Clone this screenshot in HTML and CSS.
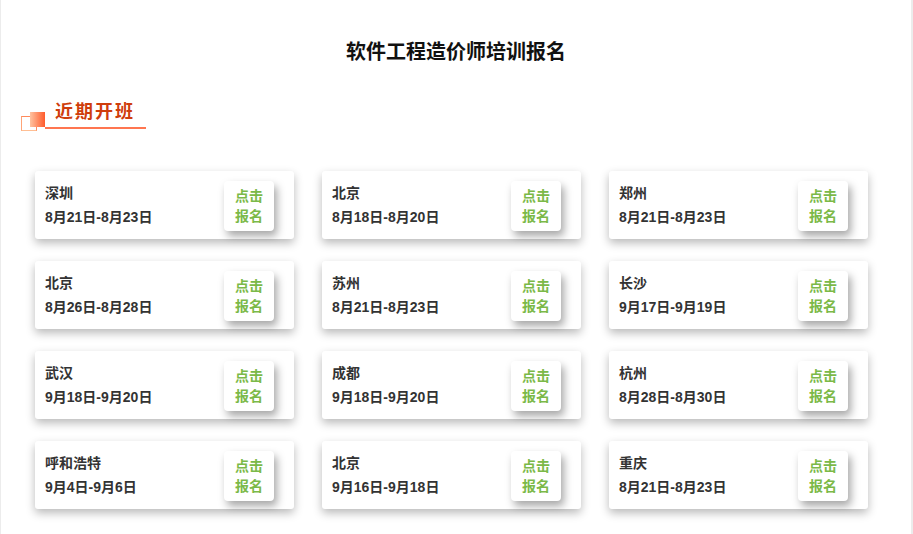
FILE: index.html
```html
<!DOCTYPE html>
<html lang="zh-CN">
<head>
<meta charset="utf-8">
<title>软件工程造价师培训报名</title>
<link rel="stylesheet" href="styles.css">
</head>
<body>
<div class="page">
  <h1 class="title">软件工程造价师培训报名</h1>
  <div class="section-head">
    <span class="sq-outline"></span>
    <span class="sq-fill"></span>
    <span class="underline"></span>
    <span class="section-title">近期开班</span>
  </div>
  <div class="grid">
    <div class="card"><div class="info"><div class="city">深圳</div><div class="date">8月21日-8月23日</div></div><a class="btn">点击<br>报名</a></div>
    <div class="card"><div class="info"><div class="city">北京</div><div class="date">8月18日-8月20日</div></div><a class="btn">点击<br>报名</a></div>
    <div class="card"><div class="info"><div class="city">郑州</div><div class="date">8月21日-8月23日</div></div><a class="btn">点击<br>报名</a></div>
    <div class="card"><div class="info"><div class="city">北京</div><div class="date">8月26日-8月28日</div></div><a class="btn">点击<br>报名</a></div>
    <div class="card"><div class="info"><div class="city">苏州</div><div class="date">8月21日-8月23日</div></div><a class="btn">点击<br>报名</a></div>
    <div class="card"><div class="info"><div class="city">长沙</div><div class="date">9月17日-9月19日</div></div><a class="btn">点击<br>报名</a></div>
    <div class="card"><div class="info"><div class="city">武汉</div><div class="date">9月18日-9月20日</div></div><a class="btn">点击<br>报名</a></div>
    <div class="card"><div class="info"><div class="city">成都</div><div class="date">9月18日-9月20日</div></div><a class="btn">点击<br>报名</a></div>
    <div class="card"><div class="info"><div class="city">杭州</div><div class="date">8月28日-8月30日</div></div><a class="btn">点击<br>报名</a></div>
    <div class="card"><div class="info"><div class="city">呼和浩特</div><div class="date">9月4日-9月6日</div></div><a class="btn">点击<br>报名</a></div>
    <div class="card"><div class="info"><div class="city">北京</div><div class="date">9月16日-9月18日</div></div><a class="btn">点击<br>报名</a></div>
    <div class="card"><div class="info"><div class="city">重庆</div><div class="date">8月21日-8月23日</div></div><a class="btn">点击<br>报名</a></div>
  </div>
</div>
</body>
</html>
```
FILE: styles.css
```css
html, body {
  margin: 0;
  padding: 0;
  background: #fff;
}
body {
  font-family: "Liberation Sans", "Noto Sans CJK SC", sans-serif;
  color: #333;
}
.page {
  box-sizing: border-box;
  width: 913px;
  height: 534px;
  border-left: 1px solid #ececec;
  border-right: 2px solid #ececec;
  overflow: hidden;
}
.title {
  margin: 0;
  padding-top: 40px;
  font-size: 20px;
  line-height: 24px;
  letter-spacing: 0;
  font-weight: bold;
  color: #111;
  text-align: center;
}
.section-head {
  position: relative;
  margin: 34px 0 0 20px;
  width: 125px;
  height: 32px;
}
.section-title {
  position: relative;
  display: block;
  padding: 2px 0 0 34px;
  font-size: 18px;
  line-height: 24px;
  letter-spacing: 2px;
  font-weight: bold;
  color: #cf3d0c;
}
.sq-outline {
  position: absolute;
  left: 0;
  top: 18px;
  width: 14px;
  height: 13px;
  border: 1.5px solid #ff8a5c;
  border-bottom-color: #ffbf94;
  border-left-color: #ffa477;
}
.sq-fill {
  position: absolute;
  left: 9px;
  top: 14px;
  width: 15px;
  height: 15px;
  background: linear-gradient(to right, #ffc3a0, #ff5b2c);
}
.underline {
  position: absolute;
  left: 24px;
  right: 0;
  top: 29px;
  height: 2px;
  background: #ff7650;
}
.grid {
  display: grid;
  grid-template-columns: repeat(3, 259px);
  grid-auto-rows: 68px;
  column-gap: 28px;
  row-gap: 22px;
  margin-top: 41px;
  padding-left: 34px;
}
.card {
  display: flex;
  align-items: flex-start;
  box-sizing: border-box;
  padding: 10px 20px 10px 10px;
  background: #fff;
  border-radius: 3px;
  box-shadow: 0 4px 10px rgba(0, 0, 0, 0.28);
}
.info {
  flex: 1;
}
.city, .date {
  font-size: 14px;
  line-height: 24px;
  font-weight: bold;
  color: #333;
}
.btn {
  width: 50px;
  height: 50px;
  display: flex;
  align-items: center;
  justify-content: center;
  text-align: center;
  background: #fff;
  border-radius: 4px;
  box-shadow: 3px 5px 8px rgba(0, 0, 0, 0.35);
  font-size: 14px;
  line-height: 20px;
  font-weight: bold;
  color: #7bb948;
  cursor: pointer;
}
```
